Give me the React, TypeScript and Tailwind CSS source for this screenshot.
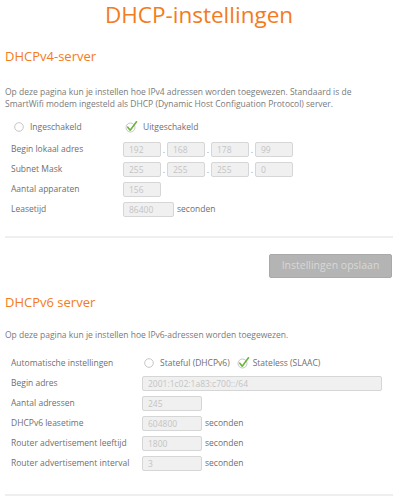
import React from "react";

const Radio = () => (
  <svg width="10" height="10" viewBox="0 0 10 10" className="shrink-0">
    <circle cx="5" cy="5" r="4.3" fill="#fff" stroke="#b8b8b8" strokeWidth="0.8" />
  </svg>
);

const Checked = () => (
  <svg width="13" height="12" viewBox="0 0 13 12" className="shrink-0">
    <circle cx="5.5" cy="6.5" r="4.5" fill="#fff" stroke="#b8b8b8" strokeWidth="0.8" />
    <path d="M2.8 6.2 L5.2 9.2 L11.5 0.8" fill="none" stroke="#6cb33f" strokeWidth="1.6" strokeLinecap="round" strokeLinejoin="round" />
  </svg>
);

const Input = ({ v, w }: { v: string; w: string }) => (
  <div className={`${w} h-[15px] bg-[#f0f0f0] border border-[#d6d6d6] rounded-[2px] pl-[5px] text-[8.5px] leading-[13px] text-[#c4c4c4]`}>
    {v}
  </div>
);

const Label = ({ children, w }: { children: React.ReactNode; w: string }) => (
  <div className={`${w} shrink-0 whitespace-nowrap text-[8.5px] text-[#6f6f6f]`}>{children}</div>
);

const Sec = () => <span className="ml-[3px] text-[8.5px] text-[#6f6f6f]">seconden</span>;

const IpRow = ({ parts }: { parts: string[] }) => (
  <div className="flex items-center">
    {parts.map((p, i) => (
      <React.Fragment key={i}>
        {i > 0 && <span className="w-[6px] text-center text-[9px] text-[#999] leading-none">.</span>}
        <Input v={p} w="w-[38px]" />
      </React.Fragment>
    ))}
  </div>
);

export default function App() {
  return (
    <div className="w-[413px] h-[500px] bg-white overflow-hidden" style={{ fontFamily: '"Open Sans", sans-serif' }}>
      <div className="ml-[5px] w-[388px]">
        <h1 className="text-center text-[22.5px] leading-[30px] text-[#f47b20]">DHCP-instellingen</h1>

        <h2 className="mt-[18px] text-[13px] leading-[16px] text-[#f47b20]">DHCPv4-server</h2>

        <p className="mt-[22px] text-[8.5px] leading-[12px] text-[#7a7a7a]">
          Op deze pagina kun je instellen hoe IPv4 adressen worden toegewezen. Standaard is de<br />SmartWifi modem ingesteld als DHCP (Dynamic Host Configuation Protocol) server.
        </p>

        <div className="mt-[7px] flex items-center h-[20px]">
          <div className="w-[118px] pl-[9px] flex items-center gap-[6px]">
            <Radio />
            <span className="text-[8.5px] text-[#6f6f6f]">Ingeschakeld</span>
          </div>
          <div className="flex items-center gap-[5px] pl-[2px]">
            <Checked />
            <span className="text-[8.5px] text-[#6f6f6f]">Uitgeschakeld</span>
          </div>
        </div>

        <div className="pl-[6px] mt-[2px] flex flex-col">
          <div className="flex items-center h-[20px]">
            <Label w="w-[112px]">Begin lokaal adres</Label>
            <IpRow parts={["192", "168", "178", "99"]} />
          </div>
          <div className="flex items-center h-[20px]">
            <Label w="w-[112px]">Subnet Mask</Label>
            <IpRow parts={["255", "255", "255", "0"]} />
          </div>
          <div className="flex items-center h-[20px]">
            <Label w="w-[112px]">Aantal apparaten</Label>
            <Input v="156" w="w-[38px]" />
          </div>
          <div className="flex items-center h-[20px]">
            <Label w="w-[112px]">Leasetijd</Label>
            <Input v="86400" w="w-[51px]" />
            <Sec />
          </div>
        </div>

        <div className="mt-[17px] h-[2px] bg-[#efefef]" />

        <div className="mt-[16px] flex justify-end pr-[1px]">
          <div className="w-[123px] h-[24px] bg-[#b4b4b4] border border-[#a9a9a9] rounded-[2px] flex items-center justify-center text-[10.5px] text-[#d8d8d8]">
            Instellingen opslaan
          </div>
        </div>

        <h2 className="mt-[16px] text-[13px] leading-[16px] text-[#f47b20]">DHCPv6 server</h2>

        <p className="mt-[19px] text-[8.5px] leading-[12px] text-[#7a7a7a]">
          Op deze pagina kun je instellen hoe IPv6-adressen worden toegewezen.
        </p>

        <div className="pl-[6px] mt-[12px] flex flex-col">
          <div className="flex items-center h-[20px]">
            <Label w="w-[131px]">Automatische instellingen</Label>
            <div className="flex items-center gap-[6px] pl-[2px]">
              <Radio />
              <span className="text-[8.5px] text-[#6f6f6f]">Stateful (DHCPv6)</span>
            </div>
            <div className="flex items-center gap-[3px] ml-[7px]">
              <Checked />
              <span className="text-[8.5px] text-[#6f6f6f]">Stateless (SLAAC)</span>
            </div>
          </div>
          <div className="flex items-center h-[20px]">
            <Label w="w-[131px]">Begin adres</Label>
            <Input v="2001:1c02:1a83:c700::/64" w="w-[240px]" />
          </div>
          <div className="flex items-center h-[20px]">
            <Label w="w-[131px]">Aantal adressen</Label>
            <Input v="245" w="w-[60px]" />
          </div>
          <div className="flex items-center h-[20px]">
            <Label w="w-[131px]">DHCPv6 leasetime</Label>
            <Input v="604800" w="w-[60px]" />
            <Sec />
          </div>
          <div className="flex items-center h-[20px]">
            <Label w="w-[131px]">Router advertisement leeftijd</Label>
            <Input v="1800" w="w-[60px]" />
            <Sec />
          </div>
          <div className="flex items-center h-[20px]">
            <Label w="w-[131px]">Router advertisement interval</Label>
            <Input v="3" w="w-[60px]" />
            <Sec />
          </div>
        </div>

        <div className="mt-[21px] h-[2px] bg-[#efefef]" />
      </div>
    </div>
  );
}
